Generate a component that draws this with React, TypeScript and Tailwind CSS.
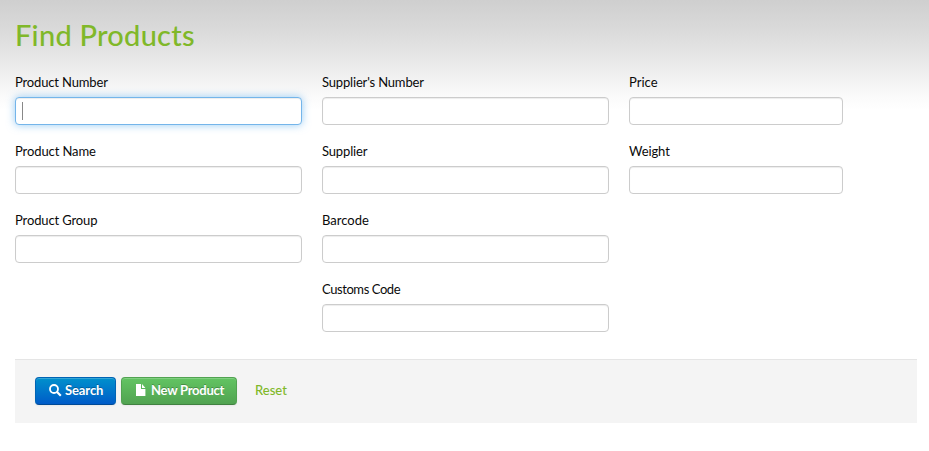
import { useState } from 'react';

type FieldProps = { label: string; tracking: string; focused?: boolean };

function Field({ label, tracking, focused = false }: FieldProps) {
  const [value, setValue] = useState('');
  return (
    <label className="block">
      <span className={`mb-[5px] block h-5 whitespace-nowrap text-[13px] leading-[21px] text-[#0a0a0a] ${tracking}`}>{label}</span>
      <span
        className={`flex h-7 items-center rounded-[4px] border bg-white px-[6px] ${
          focused
            ? 'border-[#74b5ea] shadow-[inset_0_1px_1px_rgba(0,0,0,0.075),0_0_8px_rgba(82,168,236,0.6)]'
            : 'border-[#ccc] shadow-[inset_0_1px_1px_rgba(0,0,0,0.075)]'
        }`}
      >
        {focused && <span className="h-[18px] w-px shrink-0 bg-[#888]" />}
        <input
          aria-label={label}
          value={value}
          onChange={(e) => setValue(e.target.value)}
          className="min-w-0 flex-1 bg-transparent text-[13px] outline-none"
        />
      </span>
    </label>
  );
}

function SearchIcon() {
  return (
    <svg width="13" height="13" viewBox="0 0 13 13" fill="none" stroke="white">
      <circle cx="5" cy="5" r="4" strokeWidth="1.8" />
      <path d="M8 8l3.8 3.8" strokeWidth="2.2" />
    </svg>
  );
}

function FileIcon() {
  return (
    <svg width="10" height="12" viewBox="0 0 10 12" fill="white">
      <path d="M0 0h5v5h4.4v7H0z" />
      <path d="M6 0l3.4 4H6z" />
    </svg>
  );
}

export default function App() {
  return (
    <main className="h-[451px] w-full bg-white bg-[linear-gradient(to_bottom,#cfcfcf_0,#dadada_30px,#e9e9e9_62px,#fafafa_95px,#fff_110px)] pl-[15px] pr-3 pt-4 font-['Lato','Noto_Sans',sans-serif]">
      <h1 className="h-10 whitespace-nowrap text-[29px] font-medium leading-[38px] tracking-[0.25px] text-[#80b829]">Find Products</h1>
      <div className="mt-4 grid h-[287px] grid-cols-[287px_287px_214px] items-start gap-x-5">
        <div className="flex flex-col gap-4">
          <Field label="Product Number" tracking="tracking-[-0.15px]" focused />
          <Field label="Product Name" tracking="tracking-[-0.1px]" />
          <Field label="Product Group" tracking="tracking-[-0.13px]" />
        </div>
        <div className="flex flex-col gap-4">
          <Field label="Supplier's Number" tracking="tracking-[-0.17px]" />
          <Field label="Supplier" tracking="tracking-[-0.15px]" />
          <Field label="Barcode" tracking="tracking-normal" />
          <Field label="Customs Code" tracking="tracking-[-0.42px]" />
        </div>
        <div className="flex flex-col gap-4">
          <Field label="Price" tracking="tracking-normal" />
          <Field label="Weight" tracking="tracking-[-0.1px]" />
        </div>
      </div>
      <footer className="flex h-16 items-start border-t border-[#e5e5e5] bg-[#f4f4f4] pl-5 pt-[17px] text-[13px] leading-5">
        <button className="flex h-7 w-[81px] items-center whitespace-nowrap rounded-[4px] border border-[#0064b4] border-b-[#004a96] bg-linear-to-b from-[#0090cc] to-[#005bc8] pl-[13px] font-bold text-white shadow-[inset_0_1px_0_rgba(255,255,255,0.2),0_1px_2px_rgba(0,0,0,0.05)] [text-shadow:0_-1px_0_rgba(0,0,0,0.25)]">
          <span className="-mt-px"><SearchIcon /></span>
          <span className="-mt-[2px] ml-[3px] tracking-[-0.1px]">Search</span>
        </button>
        <button className="ml-[5px] flex h-7 w-[116px] items-center whitespace-nowrap rounded-[4px] border border-[#51a351] border-b-[#408140] bg-linear-to-b from-[#62c462] to-[#51a351] pl-[14px] font-bold text-white shadow-[inset_0_1px_0_rgba(255,255,255,0.2),0_1px_2px_rgba(0,0,0,0.05)] [text-shadow:0_-1px_0_rgba(0,0,0,0.25)]">
          <span className="-mt-[2px]"><FileIcon /></span>
          <span className="-mt-[2px] ml-[5px] tracking-[-0.25px]">New Product</span>
        </button>
        <button className="ml-[18px] h-[26px] font-medium text-[#80b829]">Reset</button>
      </footer>
    </main>
  );
}
